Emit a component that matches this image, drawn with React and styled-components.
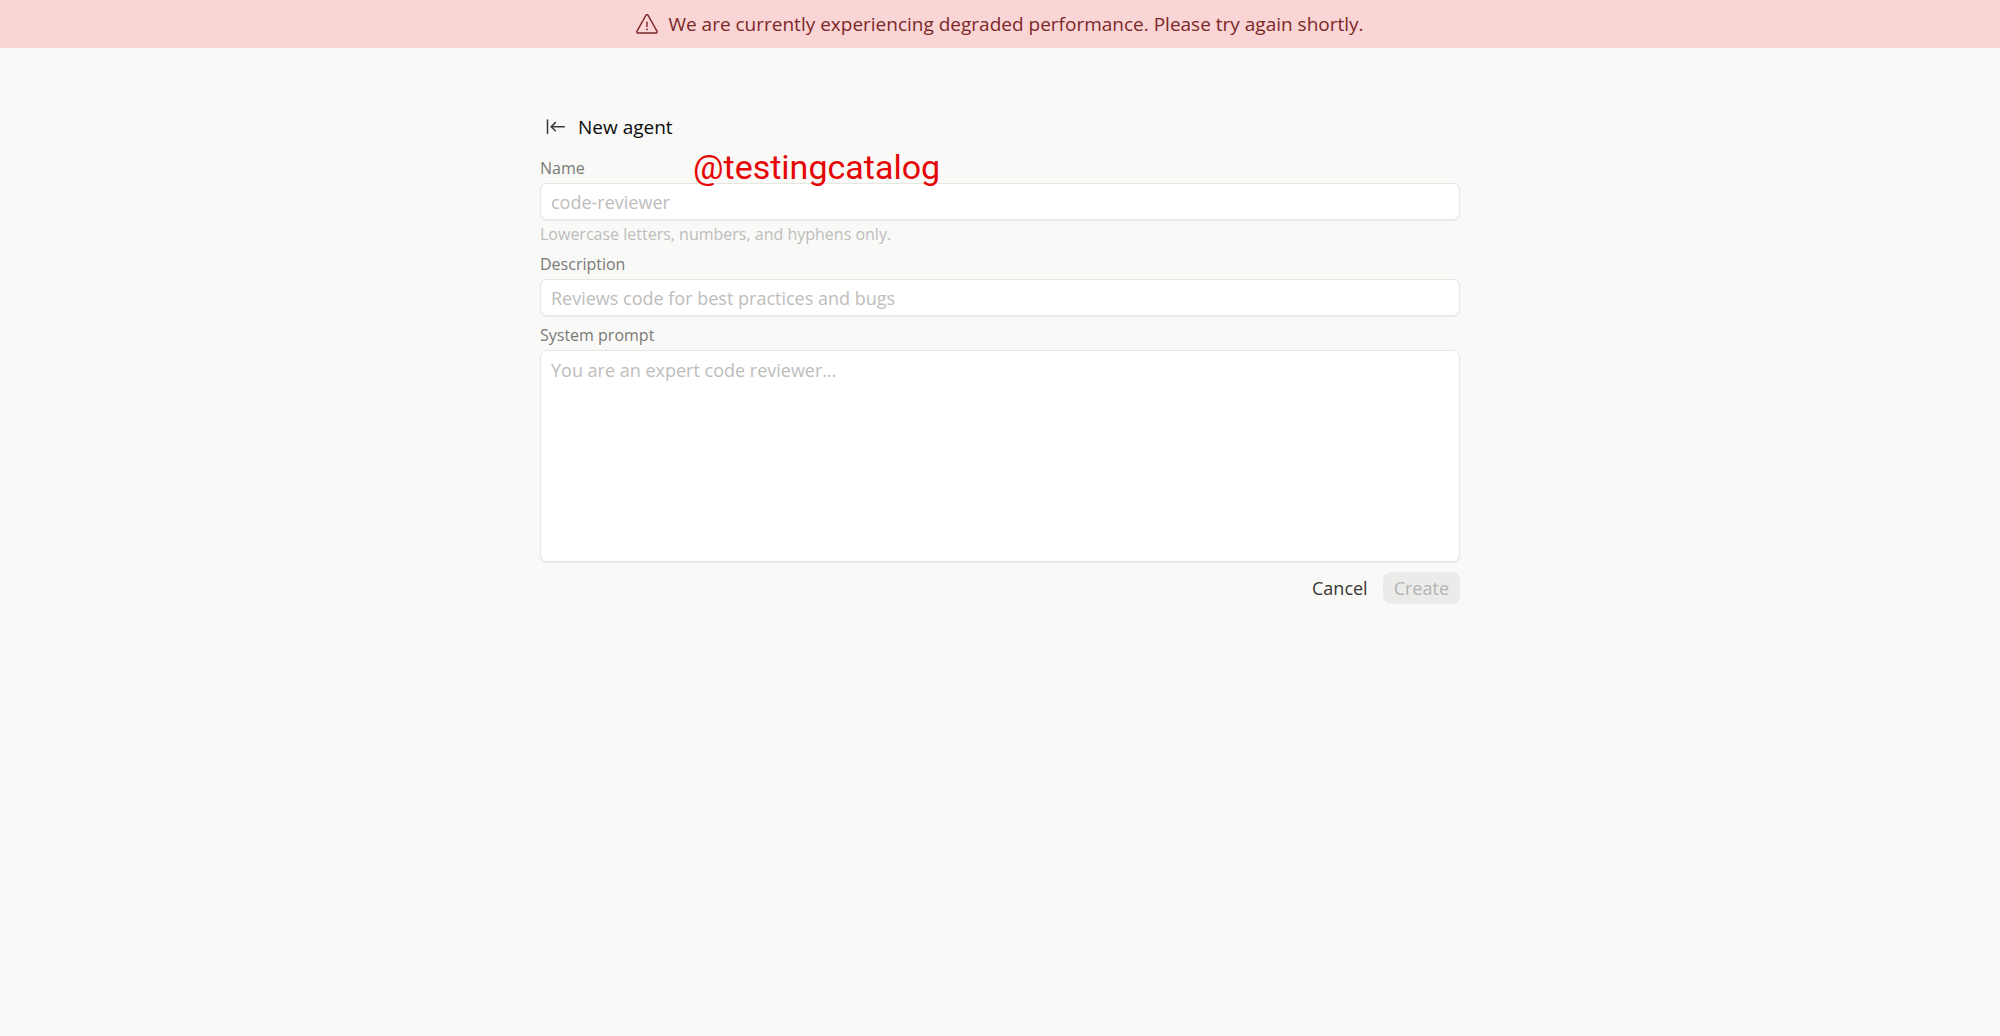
import styled, { createGlobalStyle } from 'styled-components'
import React, { useState } from 'react'

const initialFormValues = {
  name: '',
  description: '',
  prompt: '',
}

export default function App() {
  const [formValues, setFormValues] = useState(initialFormValues)

  const handleChange = (evt) => {
    const { name, value } = evt.target
    setFormValues({ ...formValues, [name]: value })
  }

  const handleCancel = () => {
    setFormValues(initialFormValues)
  }

  const disabled = !formValues.name.trim() || !formValues.description.trim() || !formValues.prompt.trim()

  return (
    <>
      <GlobalStyle />
      <Banner role='status'>
        <WarningIcon />
        <span>We are currently experiencing degraded performance. Please try again shortly.</span>
      </Banner>
      <Page>
        <Header>
          <BackButton type='button' aria-label='Back'>
            <BackIcon />
          </BackButton>
          <Title>New agent</Title>
        </Header>
        <Watermark>@testingcatalog</Watermark>
        <Form onSubmit={(evt) => evt.preventDefault()}>
          <Field>
            <Label htmlFor='name'>Name</Label>
            <Input id='name' name='name' type='text' placeholder='code-reviewer' aria-describedby='name-hint' value={formValues.name} onChange={handleChange} />
            <Hint id='name-hint'>Lowercase letters, numbers, and hyphens only.</Hint>
          </Field>
          <Field>
            <Label htmlFor='description'>Description</Label>
            <Input id='description' name='description' type='text' placeholder='Reviews code for best practices and bugs' value={formValues.description} onChange={handleChange} />
          </Field>
          <Field>
            <Label htmlFor='prompt'>System prompt</Label>
            <TextArea id='prompt' name='prompt' rows={8} placeholder='You are an expert code reviewer…' value={formValues.prompt} onChange={handleChange} />
          </Field>
          <Actions>
            <Button type='button' onClick={handleCancel}>Cancel</Button>
            <Button type='submit' $filled disabled={disabled}>Create</Button>
          </Actions>
        </Form>
      </Page>
    </>
  )
}

function WarningIcon() {
  return (
    <svg width='22' height='20' viewBox='0 0 22 20' fill='none' stroke='currentColor' strokeWidth='1.4' strokeLinecap='round' strokeLinejoin='round' aria-hidden='true'>
      <path d='M9.9 1.3a1.25 1.25 0 0 1 2.2 0l9 16a1.15 1.15 0 0 1-1 1.7H1.9a1.15 1.15 0 0 1-1-1.7z' />
      <path d='M11 8.2v4.3' />
      <circle cx='11' cy='15.4' r='0.9' fill='currentColor' stroke='none' />
    </svg>
  )
}

function BackIcon() {
  return (
    <svg width='20' height='16' viewBox='0 0 20 16' fill='none' stroke='currentColor' strokeWidth='1.5' strokeLinecap='round' strokeLinejoin='round' aria-hidden='true'>
      <path d='M1.5 1v13.5' />
      <path d='M18.3 7.7H5.4' />
      <path d='M9.3 3.6L5.2 7.7l4.1 4.1' />
    </svg>
  )
}

const GlobalStyle = createGlobalStyle`
  * {
    box-sizing: border-box;
  }
  body {
    margin: 0;
    background: #f9f9f7;
    color: #0b0b0b;
    font-family: 'Open Sans', 'Noto Sans', sans-serif;
  }
  button, input, textarea {
    font-family: inherit;
  }
`

const Banner = styled.div`
  display: flex;
  justify-content: center;
  align-items: center;
  gap: 10px;
  padding: 12px 24px;
  background: #fad5d5;
  color: #7c2728;
  font-size: 19px;
  line-height: 24px;
`

const Page = styled.main`
  position: relative;
  max-width: 920px;
  margin: 0 auto;
  padding: 63px 0;
`

const Header = styled.header`
  display: flex;
  align-items: center;
  gap: 6px;
`

const BackButton = styled.button`
  display: flex;
  align-items: center;
  justify-content: center;
  width: 32px;
  height: 32px;
  padding: 0;
  border: none;
  border-radius: 8px;
  background: none;
  color: #3a3a38;
  cursor: pointer;
`

const Title = styled.h1`
  margin: 0;
  font-size: 19px;
  font-weight: 500;
  line-height: 24px;
`

const Watermark = styled.div`
  position: absolute;
  top: 99px;
  left: 153px;
  color: #e60505;
  font-family: Roboto, sans-serif;
  font-size: 34px;
  line-height: 40px;
  pointer-events: none;
`

const Form = styled.form`
  display: flex;
  flex-direction: column;
  gap: 9px;
  padding-top: 15px;
`

const Field = styled.div`
  display: flex;
  flex-direction: column;
  gap: 4px;
`

const Label = styled.label`
  color: #7b7b78;
  font-size: 16px;
  line-height: 21px;
`

const Input = styled.input`
  width: 100%;
  height: 37px;
  padding: 0 10px;
  border: 1px solid #e6e6e3;
  border-radius: 7px;
  background: #fff;
  box-shadow: 0 1px 2px rgba(0, 0, 0, 0.06);
  color: #0b0b0b;
  font-size: 18px;
  line-height: 24px;

  &::placeholder {
    color: #bdbdbb;
    opacity: 1;
  }
`

const TextArea = styled(Input).attrs({ as: 'textarea' })`
  display: block;
  height: auto;
  padding: 7px 10px 11px;
  resize: none;
`

const Hint = styled.p`
  margin: 0;
  color: #bdbdbb;
  font-size: 16px;
  line-height: 21px;
`

const Actions = styled.div`
  display: flex;
  justify-content: flex-end;
  gap: 4px;
  padding-top: 1px;
`

const Button = styled.button`
  padding: 4px 11px;
  border: none;
  border-radius: 8px;
  background: ${props => props.$filled ? '#ebebe9' : 'none'};
  color: ${props => props.$filled ? '#b4b4b2' : '#373734'};
  font-size: 18px;
  line-height: 24px;
  cursor: ${props => props.disabled ? 'default' : 'pointer'};
`
